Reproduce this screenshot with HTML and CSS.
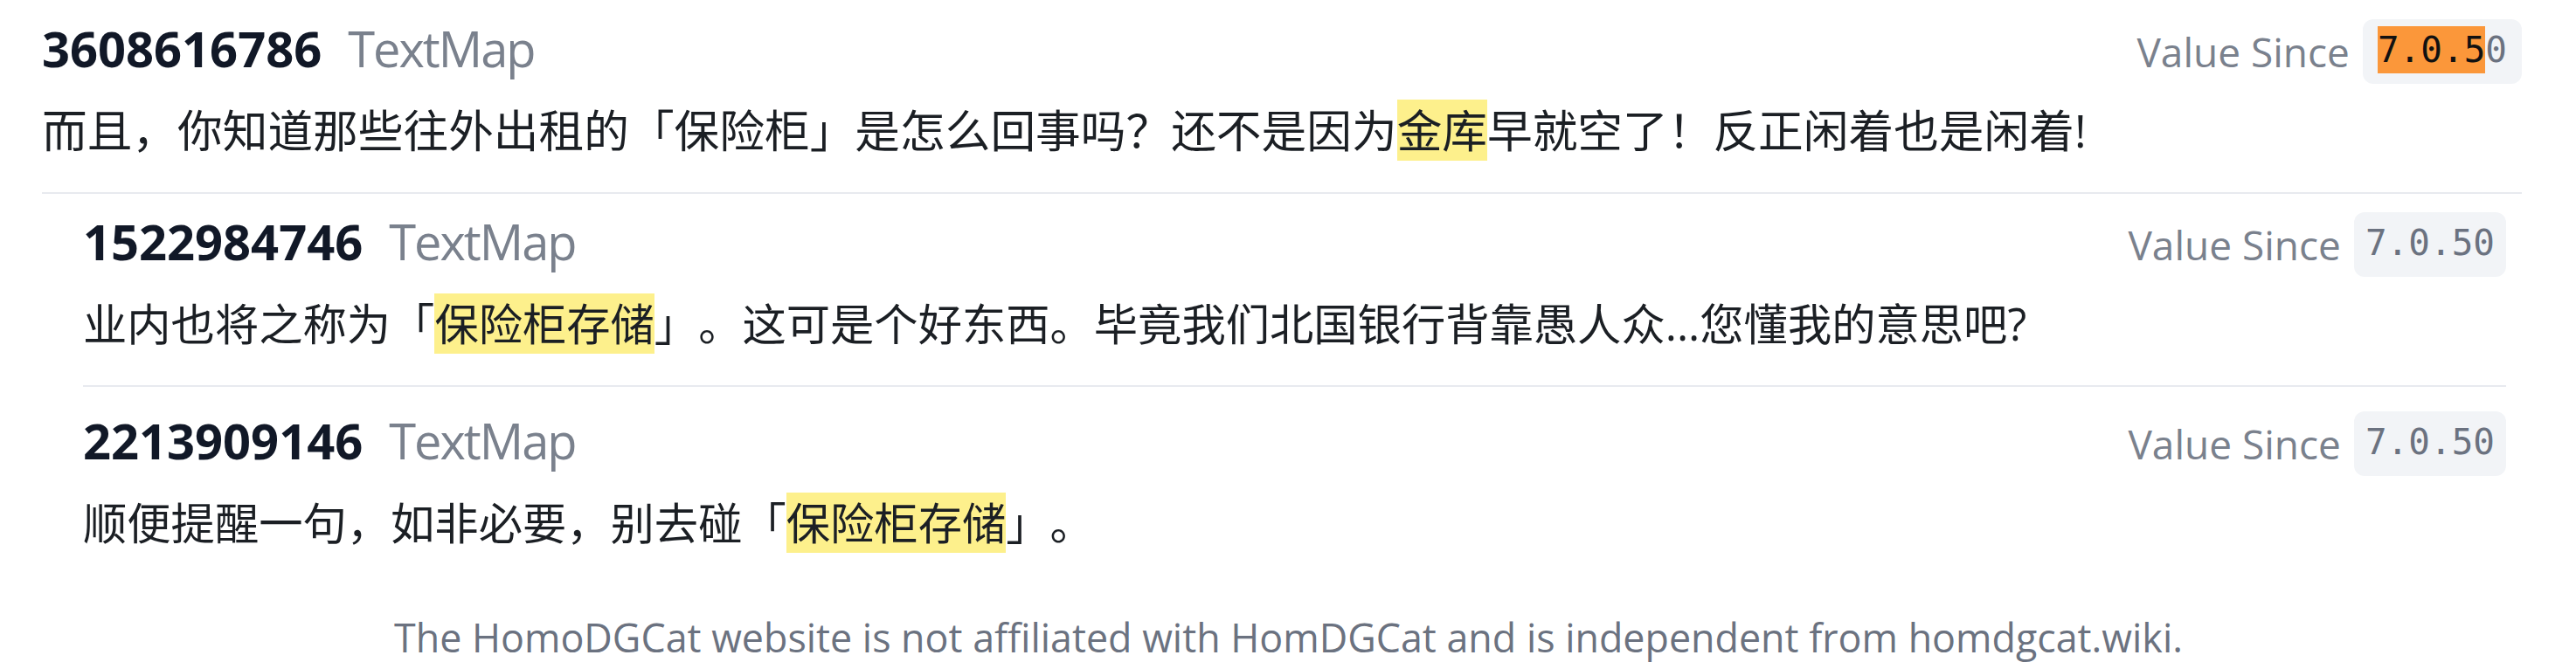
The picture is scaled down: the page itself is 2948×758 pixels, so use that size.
FILE: index.html
```html
<!DOCTYPE html>
<html lang="zh-CN">
<head>
<meta charset="utf-8">
<title>TextMap</title>
<link rel="stylesheet" href="styles.css">
</head>
<body>
<main class="page">
  <section class="entry">
    <div class="entry-head">
      <div class="entry-title"><span class="entry-id">3608616786</span><span class="entry-src">TextMap</span></div>
      <div class="entry-meta"><span class="meta-label">Value Since</span><code class="version version-hit"><mark class="hl-orange">7.0.5</mark>0</code></div>
    </div>
    <p class="entry-text entry-text-lead">而且，你知道那些往外出租的「保险柜」是怎么回事吗？还不是因为<mark class="hl">金库</mark>早就空了！反正闲着也是闲着!</p>
  </section>
  <div class="children">
    <section class="entry">
      <div class="entry-head">
        <div class="entry-title"><span class="entry-id">1522984746</span><span class="entry-src">TextMap</span></div>
        <div class="entry-meta"><span class="meta-label">Value Since</span><code class="version">7.0.50</code></div>
      </div>
      <p class="entry-text">业内也将之称为「<mark class="hl">保险柜存储</mark>」。这可是个好东西。毕竟我们北国银行背靠愚人众...您懂我的意思吧?</p>
    </section>
    <section class="entry">
      <div class="entry-head">
        <div class="entry-title"><span class="entry-id">2213909146</span><span class="entry-src">TextMap</span></div>
        <div class="entry-meta"><span class="meta-label">Value Since</span><code class="version">7.0.50</code></div>
      </div>
      <p class="entry-text">顺便提醒一句，如非必要，别去碰「<mark class="hl">保险柜存储</mark>」。</p>
    </section>
  </div>
  <footer class="footer">The HomoDGCat website is not affiliated with HomDGCat and is independent from homdgcat.wiki.</footer>
</main>
</body>
</html>
```

FILE: styles.css
```css
html, body {
  margin: 0;
  padding: 0;
  background: #ffffff;
}

body {
  font-family: "Open Sans", "Noto Sans CJK SC", sans-serif;
  color: #1b1f24;
  text-spacing-trim: space-all;
}

.page {
  padding: 1px 62px 0 48px;
}

.entry {
  padding: 15px 0 33px;
  border-bottom: 2px solid #e8eaef;
}

.children {
  margin: 0 18px 0 47px;
}

.children .entry + .entry {
  padding-top: 22px;
}

.children .entry:last-child {
  border-bottom: none;
}

.entry-head {
  display: flex;
  justify-content: space-between;
  align-items: baseline;
}

.entry-title {
  display: flex;
  align-items: baseline;
  gap: 30px;
  font-size: 56px;
  line-height: 78px;
}

.entry-id {
  font-weight: 700;
  color: #111827;
}

.entry-src {
  color: #7a818d;
  letter-spacing: -2px;
}

.entry-meta {
  display: flex;
  align-items: center;
  gap: 15px;
}

.meta-label {
  font-size: 46px;
  line-height: 66px;
  color: #7a818d;
}

.version {
  font-family: "DejaVu Sans Mono", "Liberation Mono", monospace;
  font-size: 41px;
  line-height: 50px;
  padding: 10px 13px 14px;
  background: #f2f4f7;
  border-radius: 12px;
  color: #6b7280;
}

.version-hit {
  padding-left: 17px;
  padding-right: 17px;
}

.hl-orange {
  background: #fb973a;
  color: #111111;
  padding: 3px 0;
}

.entry-text {
  margin: 16px 0 0;
  font-size: 50.3px;
  line-height: 75px;
}

.entry-text-lead {
  font-size: 51.7px;
}

.hl {
  background: #fdf08c;
  color: inherit;
}

.footer {
  text-align: center;
  margin-top: 28px;
  padding-left: 15px;
  font-size: 44.8px;
  line-height: 66px;
  color: #6b7280;
}
```
